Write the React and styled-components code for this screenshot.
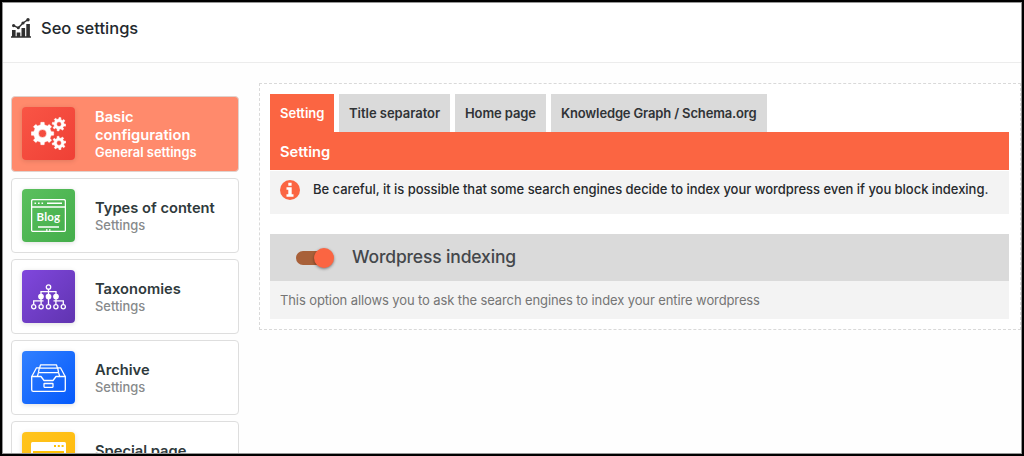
import React from "react";
import styled, { createGlobalStyle } from "styled-components";

const GlobalStyle = createGlobalStyle`
  *, *::before, *::after { box-sizing: border-box; }
  body { margin: 0; background: #fff; font-family: Inter, "Liberation Sans", sans-serif; overflow: hidden; }
`;

const Window = styled.div`
  height: 456px;
  border: 2px solid #000;
  box-shadow: inset 0 0 0 1px #969696;
  background: #fff;
  overflow: hidden;
  padding: 1px;
`;

const Header = styled.header`
  height: 60px;
  display: flex;
  align-items: flex-start;
  gap: 10px;
  padding: 15px 0 0 8px;
  border-bottom: 1px solid #ececec;
`;

const Title = styled.h1`
  margin: 0;
  font-size: 16.5px;
  line-height: 20px;
  font-weight: 500;
  color: #23282d;
`;

const Body = styled.div`
  display: flex;
  align-items: flex-start;
  height: 390px;
  overflow: hidden;
  background: #fefefe;
`;

const Sidebar = styled.nav`
  width: 228px;
  margin: 33px 0 0 8px;
  display: flex;
  flex-direction: column;
  gap: 6px;
  flex: none;
`;

const Card = styled.a`
  height: ${(p) => (p.$active ? 76 : 75)}px;
  flex: none;
  display: flex;
  align-items: flex-start;
  gap: 20px;
  padding: ${(p) => (p.$active ? "10px" : "10px")} 0 0 10px;
  border: 1px solid ${(p) => (p.$active ? "#e0d2cd" : "#dedede")};
  border-radius: 4px;
  background: ${(p) => (p.$active ? "#ff8a6c" : "#fff")};
`;

const Tile = styled.span`
  width: 53px;
  height: 53px;
  flex: none;
  display: grid;
  place-items: center;
  border-radius: 4px;
  color: #fff;
  background: ${(p) => p.$fill};
  box-shadow: 0 1px 5px rgba(0, 0, 0, 0.13);
`;

const CardText = styled.span`
  display: flex;
  flex-direction: column;
  width: 120px;
  padding-top: ${(p) => (p.$active ? 1 : 10)}px;
`;

const CardTitle = styled.span`
  font-size: 14.7px;
  line-height: 18px;
  font-weight: 600;
  color: ${(p) => (p.$active ? "#fff" : "#2f3a3c")};
`;

const CardSub = styled.span`
  font-size: 12.9px;
  line-height: 18px;
  font-weight: ${(p) => (p.$active ? 600 : 500)};
  color: ${(p) => (p.$active ? "#fff" : "#878a8b")};
`;

const Panel = styled.main`
  width: 762px;
  margin: 20px 0 0 20px;
  padding: 10px;
  border: 1px dashed #d9d9d9;
  flex: none;
  background: #fff;
`;

const Tabs = styled.div`
  display: flex;
  gap: 5px;
`;

const Tab = styled.button`
  width: ${(p) => p.$width}px;
  height: 38px;
  padding: 0 0 0 10px;
  border: 0;
  text-align: left;
  white-space: nowrap;
  font: 600 13px/38px Inter, "Liberation Sans", sans-serif;
  letter-spacing: ${(p) => p.$spacing || 0}px;
  color: ${(p) => (p.$active ? "#fff" : "#303336")};
  background: ${(p) => (p.$active ? "#fb6542" : "#dadada")};
`;

const Column = styled.div`
  width: 739px;
`;

const SectionHeading = styled.h2`
  margin: 0;
  height: 38px;
  padding-left: 10px;
  font-size: 14.7px;
  line-height: 40px;
  font-weight: 600;
  color: #fff;
  background: #fb6542;
`;

const Notice = styled.div`
  height: 44px;
  display: flex;
  align-items: flex-start;
  gap: 13px;
  padding: 9px 0 0 10px;
  background: #f3f3f3;
  border-top: 1px solid #fff;
`;

const NoticeText = styled.p`
  margin: 0;
  font-size: 13px;
  line-height: 19px;
  font-weight: 500;
  letter-spacing: -0.034px;
  white-space: nowrap;
  color: #26292c;
`;

const OptionRow = styled.div`
  height: 47px;
  margin-top: 20px;
  padding-left: 26px;
  display: flex;
  align-items: center;
  gap: 18px;
  background: #dadada;
`;

const Switch = styled.span`
  width: 38px;
  height: 20px;
  flex: none;
  display: flex;
  align-items: center;
`;

const Track = styled.span`
  width: 34px;
  height: 14px;
  flex: none;
  border-radius: 7px;
  background: #a86039;
`;

const Knob = styled.span`
  width: 20px;
  height: 20px;
  flex: none;
  margin-left: -16px;
  border-radius: 50%;
  background: #fb6542;
  box-shadow: 0 1px 3px rgba(0, 0, 0, 0.45);
`;

const OptionTitle = styled.h3`
  margin: 0 0 2px;
  font-size: 17.5px;
  line-height: 24px;
  font-weight: 500;
  letter-spacing: -0.15px;
  color: #44474b;
`;

const OptionHelp = styled.p`
  margin: 0;
  height: 38px;
  padding-left: 10px;
  font-size: 13px;
  line-height: 38px;
  letter-spacing: -0.11px;
  color: #757575;
  background: #f3f3f3;
`;

const ChartIcon = () => (
  <svg width="20" height="20" viewBox="0 0 20 20" fill="#303030">
    <path d="M0 18.3h20v1.4H0zM1 12h3.600v7H1zM5.700 14.500h3.600v4.500H5.700zM10.500 10h3.600v9h-3.600zM15.300 6h3.600v13h-3.600z" />
    <path d="M2.800 7.700L7.300 9.800L12 5L17 1.700" fill="none" stroke="#303030" strokeWidth="1.400" />
    <circle cx="2.600" cy="7.600" r="1.600" />
    <circle cx="7.300" cy="9.800" r="1.500" />
    <circle cx="12" cy="5" r="1.600" />
    <circle cx="17" cy="1.800" r="1.700" />
  </svg>
);

const InfoIcon = () => (
  <svg width="20" height="20" viewBox="0 0 20 20">
    <circle cx="10" cy="10" r="10" fill="#fb6542" />
    <path d="M8.300 2.700h3.300v3H8.300zM6.500 7.300h5.200v7h1.800v2.400h-7v-2.400h1.800V9.700H6.500z" fill="#fff" />
  </svg>
);

// Outline of a toothed wheel, with a round hole in its middle.
const gearPath = (cx, cy, outer, inner, hole, teeth, turn) => {
  const step = (Math.PI * 2) / teeth;
  const points = [];
  for (let i = 0; i < teeth; i += 1) {
    [[-0.27, inner], [-0.19, outer], [0.19, outer], [0.27, inner]].forEach(([offset, radius]) => {
      const angle = (i + offset) * step + turn;
      points.push(`${(cx + radius * Math.cos(angle)).toFixed(2)} ${(cy + radius * Math.sin(angle)).toFixed(2)}`);
    });
  }
  return `M${points.join("L")}ZM${cx - hole} ${cy}a${hole} ${hole} 0 1 0 ${hole * 2} 0a${hole} ${hole} 0 1 0 ${-hole * 2} 0Z`;
};

const GearsIcon = () => (
  <svg width="35" height="33" viewBox="0 0 35 33" fill="#fff" fillRule="evenodd" stroke="#fff" strokeWidth=".5" strokeLinejoin="round">
    <path d={gearPath(11.5, 16.5, 11.3, 8.9, 4, 8, 0)} />
    <path d={gearPath(28, 7.2, 6.8, 5.1, 2.4, 8, 0.15)} />
    <path d={gearPath(28, 26, 6.8, 5.1, 2.4, 8, -0.15)} />
  </svg>
);

const BlogText = styled.text`
  font: 700 11.5px Lato, sans-serif;
`;

const BlogIcon = () => (
  <svg width="35" height="33" viewBox="0 0 35 33" fill="none" stroke="#fff" strokeWidth="1.3">
    <rect x=".6" y=".6" width="33.800" height="31.800" rx="1.500" />
    <path d="M.6 8h33.800" />
    <path d="M3.500 4.300h1.600M7 4.300h1.600M10.500 4.300h1.600M16 4.300h15" strokeWidth="1.500" />
    <path d="M7 28h21M15 31h1.500M18 31h1.500" />
    <BlogText x="5.600" y="21.800" textLength="23.500" lengthAdjust="spacing" fill="#fff" stroke="none">Blog</BlogText>
  </svg>
);

const TreeIcon = () => (
  <svg width="35" height="26" viewBox="0 0 35 26" fill="none" stroke="#fff" strokeWidth="1.300">
    <path d="M17.500 5v5M10 11V7.700h15V11M10 14v3M17.500 14v6M25 14v3M2.700 20.500v-3.700h7.400v3.700M24.900 20.500v-3.700h7.400v3.700M10.100 16.800h2.400M22.500 16.800h2.400" />
    <circle cx="17.500" cy="3" r="2.200" />
    <g fill="#fff"><circle cx="10" cy="12.500" r="2.200" /><circle cx="17.500" cy="12.500" r="2.200" /><circle cx="25" cy="12.500" r="2.200" /></g>
    <circle cx="2.700" cy="22.700" r="2.100" /><circle cx="10.100" cy="22.700" r="2.100" /><circle cx="17.500" cy="22.700" r="2.100" /><circle cx="24.900" cy="22.700" r="2.100" /><circle cx="32.300" cy="22.700" r="2.100" />
  </svg>
);

const ArchiveIcon = () => (
  <svg width="35" height="28" viewBox="0 0 35 28" fill="none" stroke="#fff" strokeWidth="1.300" strokeLinejoin="round">
    <path d="M.7 12.500h9.300l3 4h9l3-4h9.300V25.700q0 1.600-1.600 1.600H2.300Q.7 27.300.7 25.700z" />
    <path d="M.8 12.500L5.500 3.800h2.800M34.200 12.500L29.500 3.800h-2.800M8.600 4.200L9.500.8h16l.9 3.400M8.300 4.200h18.400M7.400 8.600L8.300 4.200M26.700 4.200l.9 4.400M6.400 12.300l1-3.700h20.200l1 3.700" />
    <rect x="13" y="19.500" width="9" height="3.800" rx=".5" />
  </svg>
);

const PageIcon = () => (
  <svg width="35" height="33" viewBox="0 0 35 33">
    <rect width="35" height="33" rx="1.500" fill="#fff" />
    <path d="M23 4h2M26.800 4h2M30.600 4h2" stroke="#ffc107" strokeWidth="2" />
    <path d="M2 9h31v22H2z" fill="#ffc107" />
  </svg>
);

const sections = [
  { title: "Basic configuration", sub: "General settings", fill: "linear-gradient(135deg,#f95545,#ef4036)", icon: <GearsIcon />, active: true },
  { title: "Types of content", sub: "Settings", fill: "linear-gradient(135deg,#5bc05e,#43ad4a)", icon: <BlogIcon /> },
  { title: "Taxonomies", sub: "Settings", fill: "linear-gradient(135deg,#8047dd,#6034b0)", icon: <TreeIcon /> },
  { title: "Archive", sub: "Settings", fill: "linear-gradient(135deg,#3180ff,#0459fb)", icon: <ArchiveIcon /> },
  { title: "Special page", sub: "Settings", fill: "linear-gradient(135deg,#ffc41d,#ffb90b)", icon: <PageIcon /> },
];

const tabs = [
  { label: "Setting", width: 64, active: true },
  { label: "Title separator", width: 111, spacing: -0.03 },
  { label: "Home page", width: 91, spacing: -0.1 },
  { label: "Knowledge Graph / Schema.org", width: 216, spacing: -0.15 },
];

export default function App() {
  return (
    <Window>
      <GlobalStyle />
      <Header>
        <ChartIcon />
        <Title>Seo settings</Title>
      </Header>
      <Body>
        <Sidebar>
          {sections.map((s) => (
            <Card key={s.title} $active={s.active}>
              <Tile $fill={s.fill}>{s.icon}</Tile>
              <CardText $active={s.active}>
                <CardTitle $active={s.active}>{s.title}</CardTitle>
                <CardSub $active={s.active}>{s.sub}</CardSub>
              </CardText>
            </Card>
          ))}
        </Sidebar>
        <Panel>
          <Tabs>
            {tabs.map((t) => (
              <Tab key={t.label} $width={t.width} $spacing={t.spacing} $active={t.active}>{t.label}</Tab>
            ))}
          </Tabs>
          <Column>
            <SectionHeading>Setting</SectionHeading>
            <Notice>
              <InfoIcon />
              <NoticeText>
                Be careful, it is possible that some search engines decide to index your wordpress even if you block indexing.
              </NoticeText>
            </Notice>
            <OptionRow>
              <Switch><Track /><Knob /></Switch>
              <OptionTitle>Wordpress indexing</OptionTitle>
            </OptionRow>
            <OptionHelp>This option allows you to ask the search engines to index your entire wordpress</OptionHelp>
          </Column>
        </Panel>
      </Body>
    </Window>
  );
}
